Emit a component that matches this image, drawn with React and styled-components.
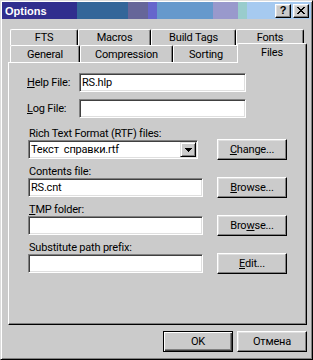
import styled, { createGlobalStyle } from "styled-components";

const face = "#cbcbcb";

const GlobalStyle = createGlobalStyle`
  html, body {
    margin: 0;
    padding: 0;
    background: ${face};
  }
  body {
    font-family: Roboto, "Liberation Sans", Arial, sans-serif;
    font-size: 11px;
    letter-spacing: -0.2px;
    color: #000;
  }
`;

// window frame

const Window = styled.div`
  width: 313px;
  height: 360px;
  box-sizing: border-box;
  background: ${face};
  border: 1px solid;
  border-color: #dcdcdc #000 #000 #dcdcdc;
  box-shadow: inset 1px 1px #fff, inset -1px -1px #808080;
  padding: 1px;
  display: flex;
  flex-direction: column;
`;

const TitleBar = styled.div`
  height: 17px;
  display: flex;
  align-items: center;
  padding: 0 2px 0 3px;
  background: linear-gradient(
    to right,
    #302e8e 0px, #302e8e 75px,
    #336699 75px, #336699 126px,
    #666699 126px, #666699 146px,
    #6666cc 146px, #6666cc 155px,
    #6699cc 155px, #6699cc 211px,
    #9999cc 211px, #9999cc 236px,
    #99cccc 236px, #99cccc 245px,
    #a6caf0 245px
  );
`;

const Title = styled.span`
  flex: 1;
  color: #fff;
  font-family: "Liberation Sans", Arial, sans-serif;
  font-weight: bold;
  font-size: 11px;
  letter-spacing: 0;
`;

const CaptionButtons = styled.div`
  display: flex;
  gap: 2px;
`;

const CaptionButton = styled.div`
  width: 16px;
  height: 14px;
  box-sizing: border-box;
  background: ${face};
  border: 1px solid;
  border-color: #fff #000 #000 #fff;
  box-shadow: inset -1px -1px #808080, inset 1px 1px #dfdfdf;
  display: flex;
  align-items: center;
  justify-content: center;
  font-family: "Liberation Sans", Arial, sans-serif;
  font-weight: bold;
  font-size: 11px;
  line-height: 1;
`;

// tabs

const TabArea = styled.div`
  margin-top: 10px;
  padding-left: 8px;
`;

const TabRow = styled.div`
  display: flex;
  align-items: flex-end;
  height: ${(p) => p.$h}px;
`;

const Tab = styled.div`
  box-sizing: border-box;
  width: ${(p) => p.$w}px;
  height: ${(p) => (p.$selected ? 20 : p.$h)}px;
  margin: ${(p) => (p.$selected ? "0 -2px -1px -2px" : "0")};
  padding-bottom: ${(p) => (p.$selected ? 3 : 0)}px;
  z-index: ${(p) => (p.$selected ? 1 : 0)};
  background: ${face};
  border-top: 1px solid #fff;
  border-left: 1px solid #fff;
  border-right: 1px solid #000;
  border-radius: 2px 2px 0 0;
  box-shadow: inset -1px 0 #808080;
  display: flex;
  align-items: center;
  justify-content: center;
`;

const Panel = styled.div`
  margin-left: 6px;
  width: 299px;
  height: 263px;
  box-sizing: border-box;
  border: 1px solid;
  border-color: #fff #000 #000 #fff;
  box-shadow: inset -1px -1px #808080;
  display: flex;
  flex-direction: column;
`;

// fields

const FieldRow = styled.div`
  display: grid;
  grid-template-columns: 52px 167px;
  align-items: center;
  padding-left: 18px;
  margin-top: ${(p) => p.$top}px;
`;

const Section = styled.div`
  padding-left: 19px;
  margin-top: ${(p) => p.$top}px;
`;

const Label = styled.div`
  height: 13px;
  line-height: 13px;
  margin: 0 0 -1px 1px;
  white-space: nowrap;
`;

const Key = styled.span`
  text-decoration: underline;
`;

const ControlRow = styled.div`
  display: grid;
  grid-template-columns: 175px 70px;
  column-gap: 14px;
  align-items: center;
  height: 21px;
`;

const Field = styled.div`
  width: ${(p) => p.$w || 175}px;
  height: 19px;
  box-sizing: border-box;
  background: #fff;
  border: 1px solid;
  border-color: #808080 #fff #fff #808080;
  box-shadow: inset 1px 1px #404040, inset -1px -1px #dfdfdf;
  padding: 0 2px;
  display: flex;
  align-items: center;
  white-space: pre;
`;

const ComboText = styled.span`
  flex: 1;
`;

const ComboArrow = styled.div`
  width: 16px;
  height: 15px;
  box-sizing: border-box;
  margin-right: -1px;
  background: ${face};
  border: 1px solid;
  border-color: #dfdfdf #000 #000 #dfdfdf;
  box-shadow: inset 1px 1px #fff, inset -1px -1px #808080;
  display: flex;
  align-items: center;
  justify-content: center;
`;

const PushButton = styled.div`
  width: 70px;
  height: 21px;
  box-sizing: border-box;
  background: ${face};
  border: 1px solid;
  border-color: ${(p) => (p.$default ? "#000" : "#fff #000 #000 #fff")};
  box-shadow: ${(p) =>
    p.$default
      ? "inset 1px 1px #fff, inset -1px -1px #404040, inset -2px -2px #808080"
      : "inset -1px -1px #808080, inset 1px 1px #dfdfdf"};
  display: flex;
  align-items: center;
  justify-content: center;
`;

const ButtonRow = styled.div`
  display: flex;
  justify-content: flex-end;
  gap: 4px;
  margin-top: 6px;
  padding-right: 4px;
`;

function CloseGlyph() {
  const rows = [
    [0, 1, 6, 7],
    [1, 2, 5, 6],
    [2, 3, 4, 5],
    [3, 4],
    [2, 3, 4, 5],
    [1, 2, 5, 6],
    [0, 1, 6, 7],
  ];
  return (
    <svg width="8" height="7" viewBox="0 0 8 7" shapeRendering="crispEdges">
      {rows.map((cols, y) =>
        cols.map((x) => <rect key={`${x}-${y}`} x={x} y={y} width="1" height="1" fill="#000" />)
      )}
    </svg>
  );
}

function ArrowGlyph() {
  return (
    <svg width="7" height="4" viewBox="0 0 7 4" shapeRendering="crispEdges">
      <rect x="0" y="0" width="7" height="1" fill="#000" />
      <rect x="1" y="1" width="5" height="1" fill="#000" />
      <rect x="2" y="2" width="3" height="1" fill="#000" />
      <rect x="3" y="3" width="1" height="1" fill="#000" />
    </svg>
  );
}

const topTabs = [
  { name: "FTS", w: 68 },
  { name: "Macros", w: 73 },
  { name: "Build Tags", w: 85 },
  { name: "Fonts", w: 68 },
];

const bottomTabs = [
  { name: "General", w: 70 },
  { name: "Compression", w: 93 },
  { name: "Sorting", w: 66 },
  { name: "Files", w: 70, selected: true },
];

export default function App() {
  return (
    <>
      <GlobalStyle />
      <Window>
        <TitleBar>
          <Title>Options</Title>
          <CaptionButtons>
            <CaptionButton>?</CaptionButton>
            <CaptionButton>
              <CloseGlyph />
            </CaptionButton>
          </CaptionButtons>
        </TitleBar>

        <TabArea>
          <TabRow $h={16}>
            {topTabs.map((t) => (
              <Tab key={t.name} $w={t.w} $h={16}>
                {t.name}
              </Tab>
            ))}
          </TabRow>
          <TabRow $h={17}>
            {bottomTabs.map((t) => (
              <Tab key={t.name} $w={t.w} $h={17} $selected={t.selected}>
                {t.name}
              </Tab>
            ))}
          </TabRow>
        </TabArea>

        <Panel>
          <FieldRow $top={10}>
            <span>
              <Key>H</Key>elp File:
            </span>
            <Field $w={167}>RS.hlp</Field>
          </FieldRow>
          <FieldRow $top={7}>
            <span>
              <Key>L</Key>og File:
            </span>
            <Field $w={167} />
          </FieldRow>

          <Section $top={9}>
            <Label>Rich Text Format (RTF) files:</Label>
            <ControlRow>
              <Field $w={170}>
                <ComboText>Текст  справки.rtf</ComboText>
                <ComboArrow>
                  <ArrowGlyph />
                </ComboArrow>
              </Field>
              <PushButton>
                <span>
                  <Key>C</Key>hange...
                </span>
              </PushButton>
            </ControlRow>
          </Section>

          <Section $top={5}>
            <Label>Contents file:</Label>
            <ControlRow>
              <Field>RS.cnt</Field>
              <PushButton>
                <span>
                  <Key>B</Key>rowse...
                </span>
              </PushButton>
            </ControlRow>
          </Section>

          <Section $top={5}>
            <Label>
              <Key>T</Key>MP folder:
            </Label>
            <ControlRow>
              <Field />
              <PushButton>
                <span>
                  Bro<Key>w</Key>se...
                </span>
              </PushButton>
            </ControlRow>
          </Section>

          <Section $top={5}>
            <Label>Substitute path prefix:</Label>
            <ControlRow>
              <Field />
              <PushButton>
                <span>
                  <Key>E</Key>dit...
                </span>
              </PushButton>
            </ControlRow>
          </Section>
        </Panel>

        <ButtonRow>
          <PushButton $default>OK</PushButton>
          <PushButton>Отмена</PushButton>
        </ButtonRow>
      </Window>
    </>
  );
}
